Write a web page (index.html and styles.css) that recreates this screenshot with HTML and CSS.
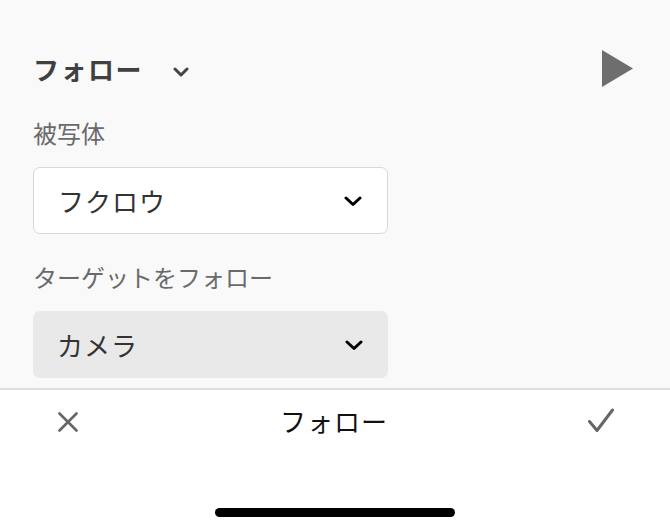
FILE: index.html
```html
<!DOCTYPE html>
<html lang="ja">
<head>
<meta charset="utf-8">
<link rel="stylesheet" href="styles.css">
</head>
<body>
<div class="screen">
  <section class="panel">
    <div class="header">
      <div class="title-group">
        <span class="title">フォロー</span>
        <svg class="title-chev" width="16" height="10" viewBox="0 0 16 10"><path d="M2 2 L8 8 L14 2" fill="none" stroke="#444" stroke-width="3" stroke-linecap="round" stroke-linejoin="round"/></svg>
      </div>
      <svg class="play" width="31" height="37" viewBox="0 0 31 37"><polygon points="0,0 31,18.5 0,37" fill="#6e6e6e"/></svg>
    </div>
    <div class="label label-first">被写体</div>
    <div class="select select-outline">
      <span class="select-text">フクロウ</span>
      <svg class="select-chev" width="18" height="11" viewBox="0 0 18 11"><path d="M2 2 L9 8.5 L16 2" fill="none" stroke="#000" stroke-width="3" stroke-linecap="round" stroke-linejoin="round"/></svg>
    </div>
    <div class="label label-second">ターゲットをフォロー</div>
    <div class="select select-filled">
      <span class="select-text">カメラ</span>
      <svg class="select-chev" width="18" height="11" viewBox="0 0 18 11"><path d="M2 2 L9 8.5 L16 2" fill="none" stroke="#000" stroke-width="3" stroke-linecap="round" stroke-linejoin="round"/></svg>
    </div>
  </section>
  <footer class="toolbar">
    <div class="toolbar-row">
      <svg class="icon-x" width="20" height="20" viewBox="0 0 20 20"><path d="M1.5 1.5 L18.5 18.5 M18.5 1.5 L1.5 18.5" fill="none" stroke="#666" stroke-width="2.6" stroke-linecap="round"/></svg>
      <span class="toolbar-title">フォロー</span>
      <svg class="icon-check" width="28" height="25" viewBox="0 0 28 25"><path d="M2.5 13.5 L10 22.5 L25.5 2" fill="none" stroke="#666" stroke-width="3" stroke-linecap="round" stroke-linejoin="round"/></svg>
    </div>
    <div class="home-row"><div class="home-indicator"></div></div>
  </footer>
</div>
</body>
</html>
```
FILE: styles.css
```css
html, body {
  margin: 0;
  padding: 0;
  background: #ffffff;
}
body {
  font-family: "Noto Sans CJK JP", "Noto Sans", sans-serif;
}
.screen {
  width: 670px;
  height: 530px;
  display: flex;
  flex-direction: column;
  overflow: hidden;
}
.panel {
  height: 390px;
  box-sizing: border-box;
  background: #f9f9f9;
  border-bottom: 2px solid #dedede;
  padding: 44px 37px 0 33px;
  display: flex;
  flex-direction: column;
}
.header {
  height: 50px;
  display: flex;
  align-items: center;
  justify-content: space-between;
}
.title-group {
  display: flex;
  align-items: center;
}
.title {
  font-size: 26px;
  line-height: 26px;
  font-weight: 700;
  color: #404040;
  letter-spacing: 1.5px;
}
.title-chev {
  margin-left: 30px;
  margin-top: 6px;
}
.play {
  margin-top: -1px;
}
.label {
  font-size: 24px;
  line-height: 24px;
  color: #6a6a6a;
}
.label-first {
  margin-top: 27px;
}
.label-second {
  margin-top: 31px;
}
.select {
  width: 355px;
  height: 67px;
  box-sizing: border-box;
  border-radius: 7px;
  display: flex;
  align-items: center;
  justify-content: space-between;
  padding: 0 25px 0 24px;
}
.select-outline {
  margin-top: 22px;
  background: #ffffff;
  border: 1px solid #d8d8d8;
}
.select-filled {
  margin-top: 22px;
  background: #e9e9e9;
}
.select-text {
  font-size: 26px;
  line-height: 26px;
  color: #333333;
  letter-spacing: 1px;
}
.select-chev {
  margin-top: 2px;
}
.toolbar {
  flex: 1;
  display: flex;
  flex-direction: column;
  background: #ffffff;
}
.toolbar-row {
  height: 62px;
  display: flex;
  align-items: center;
  justify-content: space-between;
  padding: 0 55px 0 58px;
}
.toolbar-title {
  font-size: 26px;
  line-height: 26px;
  color: #111111;
  margin-left: 3px;
  letter-spacing: 1px;
}
.icon-x {
  margin-top: 1px;
}
.icon-check {
  margin-top: -2px;
}
.home-row {
  display: flex;
  justify-content: center;
  padding-top: 56px;
}
.home-indicator {
  width: 240px;
  height: 9px;
  border-radius: 5px;
  background: #000000;
}
```
